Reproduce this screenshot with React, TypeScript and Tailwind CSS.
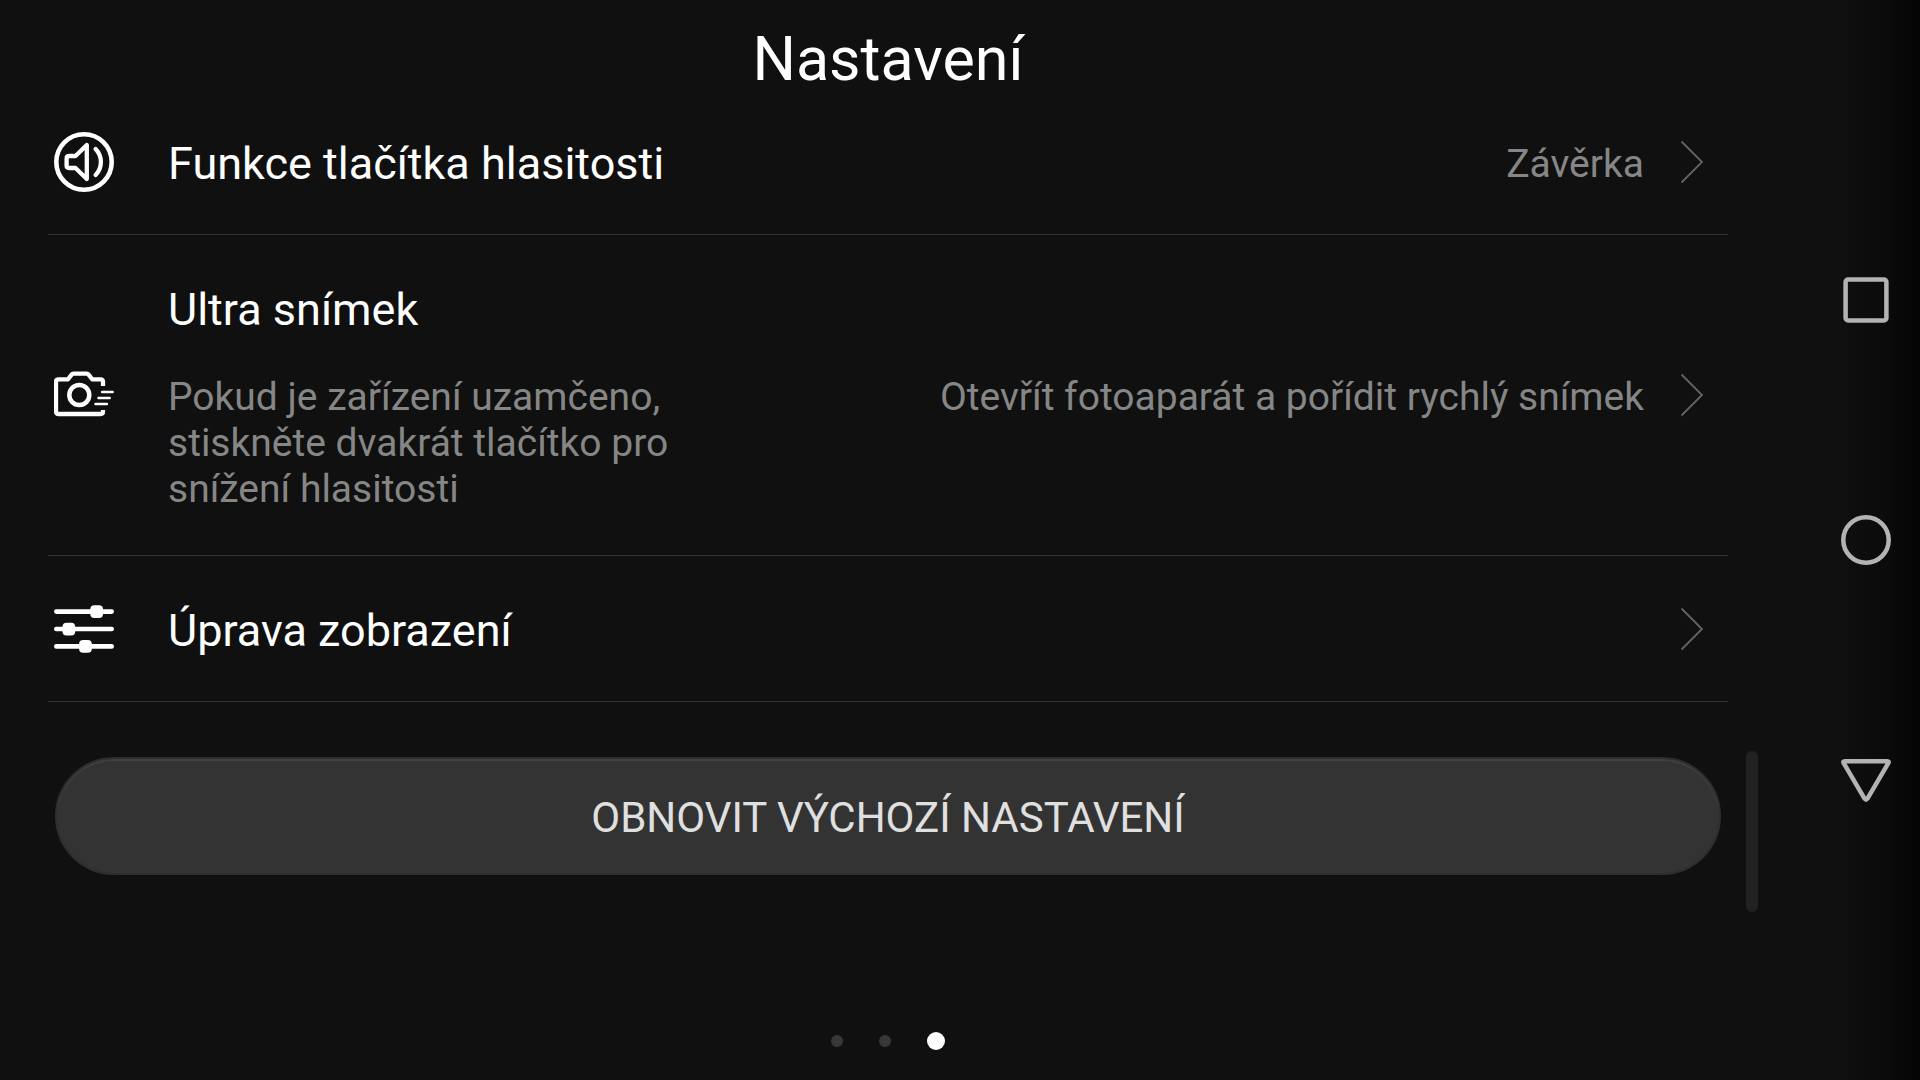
import type { ReactNode } from "react";

const stroke = {
  fill: "none",
  stroke: "currentColor",
  strokeLinecap: "round",
  strokeLinejoin: "round",
} as const;

function VolumeIcon() {
  return (
    <svg viewBox="0 0 60 60" className="size-[60px] shrink-0" aria-hidden="true" {...stroke}>
      <circle cx="30" cy="30" r="27.7" strokeWidth="4.6" />
      <path d="M15.2 24H21.5L32.8 13V47L21.5 36H15.2Q12.6 36 12.6 33.5V26.5Q12.6 24 15.2 24Z" strokeWidth="4.3" />
      <path d="M41.6 17Q46.9 22.5 46.9 30T41.6 43" strokeWidth="4.3" />
    </svg>
  );
}

function CameraIcon() {
  return (
    <svg viewBox="0 0 60 60" className="size-[60px] shrink-0" aria-hidden="true" {...stroke}>
      <path
        d="M49 21V16.8Q49 14.3 46.5 14.3H38.2L34.6 9.6Q33.9 8.7 32.8 8.7H19.4Q18.3 8.7 17.6 9.6L14 14.3H4.5Q2 14.3 2 16.8V46.5Q2 49 4.5 49H46.5Q49 49 49 46.5V45"
        strokeWidth="4.3"
        strokeLinecap="butt"
      />
      <circle cx="25.3" cy="30" r="10" strokeWidth="4.5" />
      <path d="M48.2 27H58.6M44.6 33H55.6M41.6 39H52.8" strokeWidth="2.7" />
    </svg>
  );
}

function SlidersIcon() {
  return (
    <svg viewBox="0 0 60 60" className="size-[60px] shrink-0" aria-hidden="true" {...stroke}>
      <path d="M2.3 12.6H57.7M2.3 30H57.7M2.3 47.4H57.7" strokeWidth="4.6" />
      <g fill="currentColor" stroke="none">
        <rect x="36.3" y="6.3" width="12.7" height="12.7" rx="4" />
        <rect x="8.5" y="23.7" width="12.7" height="12.7" rx="4" />
        <rect x="25.1" y="41" width="12.7" height="12.7" rx="4" />
      </g>
    </svg>
  );
}

function Chevron() {
  return (
    <svg viewBox="0 0 24 44" className="h-11 w-6 shrink-0 text-[#636363]" aria-hidden="true" fill="none" stroke="currentColor">
      <path d="M1.5 1.5L22 22L1.5 42.5" strokeWidth="1.8" />
    </svg>
  );
}

type RowProps = { icon: ReactNode; title: string; value?: string; description?: string };

function SettingRow({ icon, title, value, description }: RowProps) {
  return (
    <li className="border-b border-[#333333]">
      <button type="button" className="flex min-h-[145px] w-full items-center pr-6 pl-1.5 text-left">
        {icon}
        {description ? (
          <span className="flex w-[570px] flex-col gap-[38px] pt-12 pb-[43px] pl-[54px]">
            <span className="text-[45px] leading-[53px]">{title}</span>
            <span className="text-[39px] leading-[46px] text-[#868686]">{description}</span>
          </span>
        ) : (
          <span className="pt-1 pl-[54px] text-[45px] leading-[53px]">{title}</span>
        )}
        <span className="flex-1 pt-1 pr-9 text-right text-[39px] leading-[46px] text-[#868686]">{value}</span>
        <Chevron />
      </button>
    </li>
  );
}

function NavButton({ label, children }: { label: string; children: ReactNode }) {
  return (
    <button type="button" aria-label={label} className="flex h-60 w-full items-center justify-center pl-9 text-[#b3b3b3]">
      <svg viewBox="0 0 50 50" className="size-[50px]" aria-hidden="true" {...stroke} strokeWidth="4.5">
        {children}
      </svg>
    </button>
  );
}

export default function App() {
  return (
    <div className="flex min-h-screen bg-[#101010] font-[Roboto,sans-serif] text-white">
      <main className="relative flex flex-1 flex-col">
        <h1 className="pt-[29px] text-center text-[61px] leading-[60px]">Nastavení</h1>
        <ul className="mx-12">
          <SettingRow icon={<VolumeIcon />} title="Funkce tlačítka hlasitosti" value="Závěrka" />
          <SettingRow
            icon={<CameraIcon />}
            title="Ultra snímek"
            description="Pokud je zařízení uzamčeno, stiskněte dvakrát tlačítko pro snížení hlasitosti"
            value="Otevřít fotoaparát a pořídit rychlý snímek"
          />
          <SettingRow icon={<SlidersIcon />} title="Úprava zobrazení" />
        </ul>
        <button
          type="button"
          className="mx-[55px] mt-[55px] rounded-full border-2 border-[#2e2e2e] bg-[#333333] pt-[34px] pb-[30px] text-[42px] leading-[50px] text-[#e0e0e0] shadow-[inset_0_2px_1px_#414141]"
        >
          OBNOVIT VÝCHOZÍ NASTAVENÍ
        </button>
        <div className="absolute top-[751px] right-[18px] h-[161px] w-3 rounded-full bg-[#212121]" />
        <div className="mt-auto flex items-center justify-center gap-9 pb-[30px]">
          <span className="size-3 rounded-full bg-[#373737]" />
          <span className="size-3 rounded-full bg-[#373737]" />
          <span className="size-[18px] rounded-full bg-white" />
        </div>
      </main>
      <nav className="flex w-36 flex-col justify-center bg-linear-to-r from-[#101010] from-40% via-[#0b0b0b] via-75% to-[#050505]">
        <NavButton label="Poslední aplikace">
          <rect x="4.6" y="4.6" width="40.8" height="40.8" rx="2.5" />
        </NavButton>
        <NavButton label="Domů">
          <circle cx="25" cy="25" r="22.7" />
        </NavButton>
        <NavButton label="Zpět">
          <path d="M3.8 6.2H46.2Q48.4 6.2 47.3 8.2L26.3 43.8Q25 45.6 23.7 43.8L2.7 8.2Q1.6 6.2 3.8 6.2Z" />
        </NavButton>
      </nav>
    </div>
  );
}
